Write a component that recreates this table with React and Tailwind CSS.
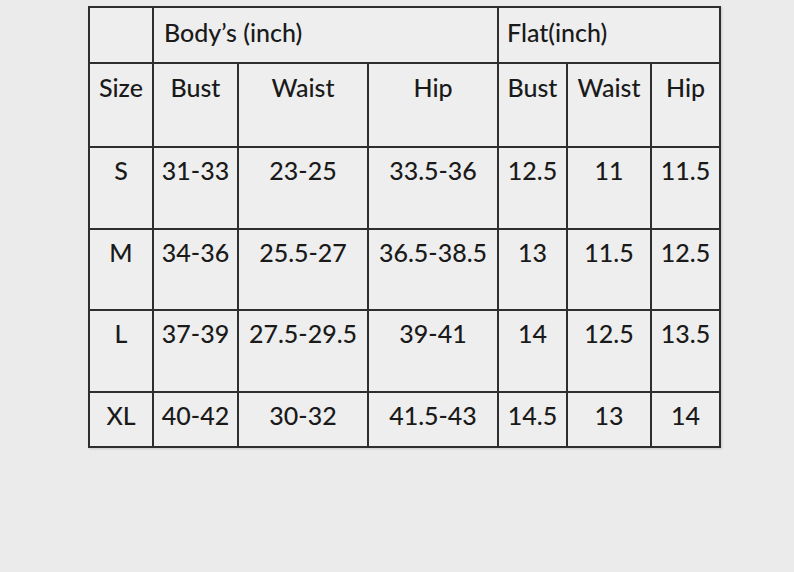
export default function App() {
  const rows = [
    ["S", "31-33", "23-25", "33.5-36", "12.5", "11", "11.5"],
    ["M", "34-36", "25.5-27", "36.5-38.5", "13", "11.5", "12.5"],
    ["L", "37-39", "27.5-29.5", "39-41", "14", "12.5", "13.5"],
    ["XL", "40-42", "30-32", "41.5-43", "14.5", "13", "14"],
  ];
  const heights = ["h-[80px]", "h-[79px]", "h-[80px]", "h-[53px]"];
  const cell = "bg-[#eeeeee] flex justify-center pt-[7px]";
  return (
    <div
      className="w-[794px] h-[572px] bg-[#ebebeb] pt-[6px] pl-[88px] text-[#1a1a1a]"
      style={{ fontFamily: "Lato, 'Open Sans', sans-serif" }}
    >
      <div className="inline-grid grid-cols-[62px_83px_128px_128px_67px_82px_67px] gap-[2px] bg-[#2e2e2e] border-2 border-[#2e2e2e] text-[25px] leading-[30px] font-medium shadow-[1px_1px_2px_rgba(0,0,0,0.15)]">
        <div className="bg-[#eeeeee] h-[54px]"></div>
        <div className="col-span-3 bg-[#eeeeee] h-[54px] flex items-center pl-[10px] pb-[7px]">Body’s (inch)</div>
        <div className="col-span-3 bg-[#eeeeee] h-[54px] flex items-center pl-[8px] pb-[7px]">Flat(inch)</div>
        {["Size", "Bust", "Waist", "Hip", "Bust", "Waist", "Hip"].map((t, i) => (
          <div key={"h" + i} className={cell + " h-[82px] pt-[8px]"}>{t}</div>
        ))}
        {rows.map((r, ri) =>
          r.map((t, i) => (
            <div key={ri + "-" + i} className={cell + " " + heights[ri]}>{t}</div>
          ))
        )}
      </div>
    </div>
  );
}
